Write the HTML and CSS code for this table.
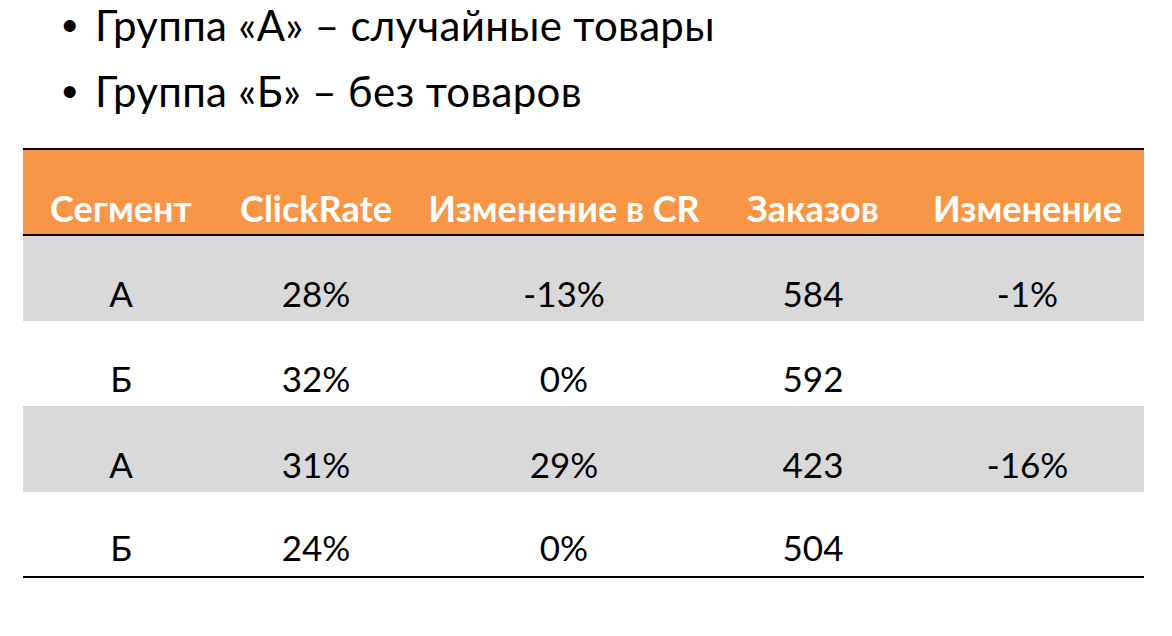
FILE: index.html
```html
<!DOCTYPE html>
<html lang="ru">
<head>
<meta charset="utf-8">
<link rel="stylesheet" href="styles.css">
</head>
<body>
<ul class="bullets">
  <li class="bullet">Группа «А» – случайные товары</li>
  <li class="bullet">Группа «Б» – без товаров</li>
</ul>
<table class="data">
  <colgroup>
    <col class="c1"><col class="c2"><col class="c3"><col class="c4"><col class="c5">
  </colgroup>
  <thead>
    <tr class="head">
      <th>Сегмент</th><th>ClickRate</th><th>Изменение в CR</th><th>Заказов</th><th>Изменение</th>
    </tr>
  </thead>
  <tbody>
    <tr class="shade"><td>А</td><td>28%</td><td>-13%</td><td>584</td><td>-1%</td></tr>
    <tr class="plain"><td>Б</td><td>32%</td><td>0%</td><td>592</td><td></td></tr>
    <tr class="shade tall"><td>А</td><td>31%</td><td>29%</td><td>423</td><td>-16%</td></tr>
    <tr class="plain last"><td>Б</td><td>24%</td><td>0%</td><td>504</td><td></td></tr>
  </tbody>
</table>
</body>
</html>
```
FILE: styles.css
```css
html, body {
  margin: 0;
  padding: 0;
  background: #ffffff;
}
body {
  width: 1172px;
  height: 636px;
  overflow: hidden;
  font-family: "Lato", "Noto Sans", sans-serif;
  color: #000000;
}
.bullets {
  list-style: none;
  margin: 0;
  padding: 0 0 0 62px;
}
.bullet {
  display: flex;
  align-items: baseline;
  font-size: 42px;
  line-height: 51px;
  letter-spacing: 0.3px;
  white-space: nowrap;
}
.bullet + .bullet {
  margin-top: 15px;
}
.bullet::before {
  content: "•";
  font-family: "Liberation Sans", sans-serif;
  font-size: 44px;
  width: 33px;
  flex: none;
}
.data {
  margin: 31px 0 0 23px;
  width: 1121px;
  border-collapse: separate;
  border-spacing: 0;
  table-layout: fixed;
}
.c1 { width: 196px; }
.c2 { width: 194px; }
.c3 { width: 302px; }
.c4 { width: 196px; }
.c5 { width: 233px; }
.head {
  background: #f79646;
}
.head th {
  height: 88px;
  padding: 0 0 8px 0;
  box-sizing: border-box;
  border-top: 2px solid #000000;
  border-bottom: 2px solid #000000;
  vertical-align: bottom;
  text-align: center;
  color: #ffffff;
  font-weight: 700;
  font-size: 36px;
  line-height: 36px;
  white-space: nowrap;
}
.shade { background: #d9d9d9; }
.plain { background: #ffffff; }
.data td {
  height: 85px;
  padding: 0 0 10px 0;
  box-sizing: border-box;
  vertical-align: bottom;
  text-align: center;
  font-size: 35px;
  line-height: 35px;
  white-space: nowrap;
}
.data .tall td {
  height: 86px;
}
.data .last td {
  height: 86px;
  padding-bottom: 11px;
  border-bottom: 2px solid #000000;
}
```
